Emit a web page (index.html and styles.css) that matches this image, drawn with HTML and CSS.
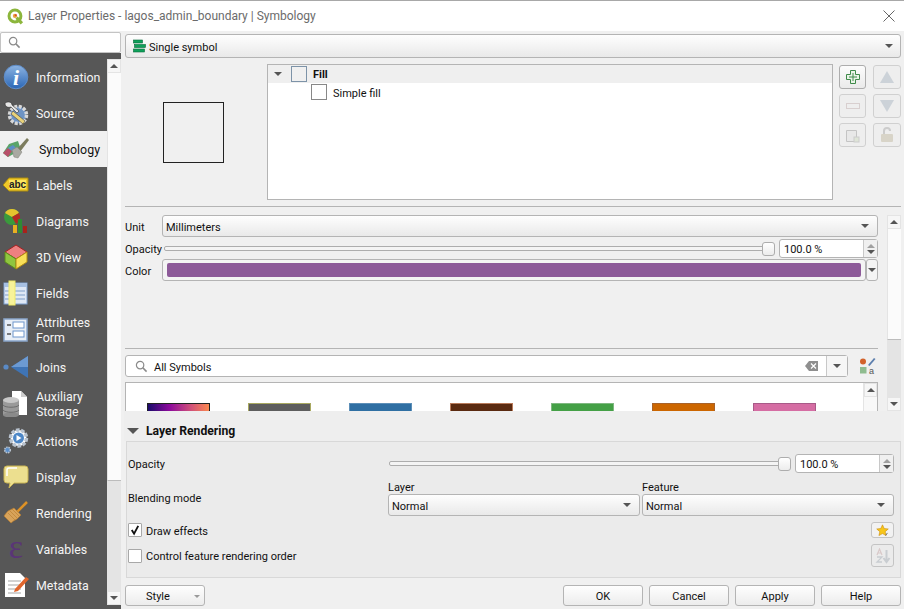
FILE: index.html
```html
<!DOCTYPE html>
<html lang="en">
<head>
    <meta charset="UTF-8">
    <title>Layer Properties - lagos_admin_boundary | Symbology</title>
    <link rel="stylesheet" href="styles.css">
</head>
<body>
    <div class="titlebar">
        <svg class="app-icon" viewBox="0 0 16 16">
            <circle cx="7.5" cy="7.5" r="5.6" fill="none" stroke="#8cb63c" stroke-width="2.8"/>
            <path d="M9 9l5 5.5" stroke="#8cb63c" stroke-width="3"/>
            <circle cx="7.5" cy="7.5" r="2" fill="#e8a33d"/>
            <circle cx="8.2" cy="6.8" r="1" fill="#d9482b"/>
        </svg>
        <span class="title-text">Layer Properties - lagos_admin_boundary | Symbology</span>
        <svg class="close-icon" viewBox="0 0 12 12"><path d="M.5.5l11 11M11.500.5l-11 11" stroke="#666" fill="none"/></svg>
    </div>
    <div class="dialog">
        <aside class="sidebar">
            <div class="side-search">
                <svg class="search-icon" viewBox="0 0 14 14"><circle cx="5.500" cy="5.500" r="4" fill="none" stroke="#8a8a8a" stroke-width="1.300"/><path d="M8.500 8.500l4 4" stroke="#8a8a8a" stroke-width="1.600"/></svg>
            </div>
            <div class="side-body">
                <nav class="side-list">
                    <div class="side-item">
                        <svg viewBox="0 0 26 26"><defs><linearGradient id="infoBlue" x1="0" y1="0" x2="0" y2="1"><stop offset="0" stop-color="#8db4e2"/><stop offset="1" stop-color="#2a66b5"/></linearGradient></defs><circle cx="13" cy="13" r="11.800" fill="url(#infoBlue)" stroke="#5e8cc8"/><text x="13" y="21" class="info-i">i</text></svg>
                        <span>Information</span>
                    </div>
                    <div class="side-item">
                        <svg viewBox="0 0 26 26"><circle cx="15" cy="15" r="8.500" fill="#6d93c4" stroke="#d8d8d8" stroke-width="3.500" stroke-dasharray="3 1.500"/><path d="M2 3c3-2 7-1 7 2l7 6-2 2-6-6C5 8 2 7 2 3z" fill="#e6e6e6" stroke="#333" stroke-width=".6"/><path d="M10 11l12 10-2 3L8 14z" fill="#e8d27a" stroke="#444" stroke-width=".6"/></svg>
                        <span>Source</span>
                    </div>
                    <div class="side-item current">
                        <svg viewBox="0 0 26 26"><path d="M6 8l9-3 3 9-13 7-5-4z" fill="#5aa469"/><path d="M0 17l5-5 4 3-4 6z" fill="#b8506a"/><path d="M5 12l5-3 3 3-4 3z" fill="#5c8fc9"/><path d="M14 13L24 2l2 2-9 12z" fill="#7d7d5e"/><path d="M9 14l5-3 5 5-4 6-4-1z" fill="#a9a9a2" stroke="#808078" stroke-width=".5"/></svg>
                        <span>Symbology</span>
                    </div>
                    <div class="side-item">
                        <svg viewBox="0 0 26 26"><path d="M6 6h19v13H6l-6-6z" fill="#f0c929" stroke="#a98a12"/><rect x="6" y="8" width="17" height="9" fill="#fbe65f"/><text x="14.500" y="16" class="abc">abc</text></svg>
                        <span>Labels</span>
                    </div>
                    <div class="side-item">
                        <svg viewBox="0 0 26 26"><circle cx="9" cy="9" r="8" fill="#3a9a3c"/><path d="M9 9V1a8 8 0 0 1 7 4z" fill="#e5c32e"/><path d="M9 9L2 5a8 8 0 0 1 7-4z" fill="#e5c32e"/><path d="M9 9l7-4a8 8 0 0 1-3 11z" fill="#b22a22"/><rect x="10" y="17" width="4" height="8" fill="#e8b021"/><rect x="15" y="11" width="4" height="14" fill="#2f8a34"/><rect x="20" y="18" width="4" height="7" fill="#a8231b"/></svg>
                        <span>Diagrams</span>
                    </div>
                    <div class="side-item">
                        <svg viewBox="0 0 26 26"><path d="M13 1l11 7-11 7L2 8z" fill="#ee8080" stroke="#a52020"/><path d="M2 8l11 7v10L2 18z" fill="#8fc63f" stroke="#5b8a1d"/><path d="M24 8l-11 7v10l11-7z" fill="#f8df58" stroke="#b28e12"/></svg>
                        <span>3D View</span>
                    </div>
                    <div class="side-item">
                        <svg viewBox="0 0 26 26"><rect x="1" y="3" width="23" height="21" fill="#dfe8f5" stroke="#7da0cf"/><rect x="1" y="3" width="23" height="4" fill="#a7c0e2"/><path d="M12 11h10M12 15h10M12 19h10M2 11h4M2 15h4M2 19h4" stroke="#7f9fc9"/><rect x="6" y="1" width="6" height="24" fill="#f8f39a" stroke="#f0e96a"/></svg>
                        <span>Fields</span>
                    </div>
                    <div class="side-item tall">
                        <svg viewBox="0 0 26 26"><rect x="1" y="2" width="23" height="22" fill="#e8eef6" stroke="#8aa6cc" stroke-width="1.500"/><path d="M4 8h4M4 17h4" stroke="#555" stroke-width="1.500"/><rect x="10" y="5" width="11" height="6" fill="#fff" stroke="#6d95cc"/><rect x="10" y="14" width="11" height="6" fill="#fff" stroke="#6d95cc"/></svg>
                        <span>Attributes<br>Form</span>
                    </div>
                    <div class="side-item">
                        <svg viewBox="0 0 26 26"><circle cx="3" cy="13" r="2.600" fill="#5a8ac6"/><path d="M25 2v22L8 13z" fill="#3f74b5"/><path d="M25 2v11H8z" fill="#6c9ad2"/></svg>
                        <span>Joins</span>
                    </div>
                    <div class="side-item tall">
                        <svg viewBox="0 0 26 26"><path d="M9 0h9l6 6v18H9z" fill="#fff"/><path d="M18 0v6h6z" fill="#ccc"/><rect x="0" y="9" width="16" height="15" fill="#9a9a9a"/><ellipse cx="8" cy="9" rx="8" ry="3" fill="#c8c8c8"/><ellipse cx="8" cy="24" rx="8" ry="2.500" fill="#8a8a8a"/><path d="M0 14c2 3 14 3 16 0M0 19c2 3 14 3 16 0" fill="none" stroke="#6e6e6e"/></svg>
                        <span>Auxiliary<br>Storage</span>
                    </div>
                    <div class="side-item">
                        <svg viewBox="0 0 26 26"><circle cx="15.500" cy="10" r="8" fill="#fff" stroke="#b9c3cf" stroke-width="3.500" stroke-dasharray="3.500 1.500"/><circle cx="15.500" cy="10" r="5.500" fill="#4d87c7"/><path d="M13.500 7l5 3-5 3z" fill="#fff"/><circle cx="4.500" cy="22" r="2.800" fill="#5b8fca" stroke="#b9c3cf" stroke-width="1.600" stroke-dasharray="1.500 .8"/></svg>
                        <span>Actions</span>
                    </div>
                    <div class="side-item">
                        <svg viewBox="0 0 26 26"><path d="M4 2h18q3 0 3 3v11q0 3-3 3H11l-5 5 1-5H4q-3 0-3-3V5q0-3 3-3z" fill="#ecdf8f" stroke="#c9b455"/><path d="M4 12V6q0-2 2-2h8" fill="none" stroke="#fff" stroke-width="1.500"/></svg>
                        <span>Display</span>
                    </div>
                    <div class="side-item">
                        <svg viewBox="0 0 26 26"><path d="M13 13L24 2" stroke="#dd9226" stroke-width="2.500"/><path d="M11 8l7 7-4 4q-4 2-6 4l-7-7q2-3 4-5z" fill="#d8a35a" stroke="#b87b2a" stroke-width=".6"/><path d="M5 13l7 7M7 11l7 7M9 9l7 7" stroke="#b87b2a" stroke-width=".6"/></svg>
                        <span>Rendering</span>
                    </div>
                    <div class="side-item">
                        <b class="epsilon">ε</b>
                        <span>Variables</span>
                    </div>
                    <div class="side-item">
                        <svg viewBox="0 0 26 26"><path d="M2 1h15l5 5v19H2z" fill="#fff"/><path d="M5 9h13M5 13h13M5 17h13M5 21h13" stroke="#a5a5a5" stroke-width="1.200"/><path d="M12 17L23 5l3 2-11 12-4 1z" fill="#e0652c"/></svg>
                        <span>Metadata</span>
                    </div>
                </nav>
                <div class="side-scroll">
                    <div class="sb-btn"><i class="arrow-up"></i></div>
                    <div class="sb-handle"></div>
                    <div class="sb-track"></div>
                    <div class="sb-btn"><i class="arrow-down"></i></div>
                </div>
            </div>
        </aside>

        <main class="content">
            <div class="combo renderer">
                <svg class="renderer-icon" viewBox="0 0 14 14"><rect x=".5" y="1" width="9" height="3" fill="#0fa05a" stroke="#056b3a" stroke-width=".6"/><rect x="1.500" y="5.500" width="11" height="3" fill="#0fa05a" stroke="#056b3a" stroke-width=".6"/><rect x=".5" y="10" width="11" height="3" fill="#0fa05a" stroke="#056b3a" stroke-width=".6"/></svg>
                <span>Single symbol</span>
                <i class="arrow-down dark"></i>
            </div>

            <div class="symbol-top">
                <div class="preview"><div class="preview-box"></div></div>
                <div class="layer-tree">
                    <div class="tree-row head">
                        <i class="arrow-down tree-arrow"></i>
                        <span class="tree-swatch head-swatch"></span>
                        <b>Fill</b>
                    </div>
                    <div class="tree-row child">
                        <span class="tree-swatch"></span>
                        <span class="tree-text">Simple fill</span>
                    </div>
                </div>
                <div class="tree-buttons">
                    <div class="tool-btn active"><svg viewBox="0 0 16 16"><path d="M5.500 1.500h5v4h4v5h-4v4h-5v-4h-4v-5h4z" fill="#e9f4e7" stroke="#3f8a4a"/><path d="M8 4v8M4 8h8" stroke="#3f8a4a"/></svg></div>
                    <div class="tool-btn"><svg viewBox="0 0 16 16"><path d="M8 2l7 12H1z" fill="#ccd2d8"/></svg></div>
                    <div class="tool-btn"><svg viewBox="0 0 16 16"><rect x="1.500" y="5.500" width="13" height="5" fill="#eee" stroke="#d8cfcf"/></svg></div>
                    <div class="tool-btn"><svg viewBox="0 0 16 16"><path d="M8 14L1 2h14z" fill="#ccd2d8"/></svg></div>
                    <div class="tool-btn"><svg viewBox="0 0 16 16"><path d="M1.500 3.500h10v11h-10z" fill="#e8e8e8" stroke="#c4c4c4"/><rect x="9" y="10" width="5" height="5" fill="#dfe5d8" stroke="#ccc"/></svg></div>
                    <div class="tool-btn"><svg viewBox="0 0 16 16"><path d="M5 7V4q0-3 3-3t3 3" fill="none" stroke="#ccc" stroke-width="2"/><rect x="2" y="7" width="12" height="8" rx="1" fill="#d8d4c8"/></svg></div>
                </div>
            </div>

            <div class="rule top-rule"></div>

            <div class="symbol-panel">
                <div class="symbol-main">
                    <div class="form-row unit-row">
                        <label>Unit</label>
                        <div class="combo grow"><span>Millimeters</span><i class="arrow-down dark"></i></div>
                    </div>
                    <div class="form-row opacity-row">
                        <label>Opacity</label>
                        <div class="slider"><div class="slider-groove"></div><div class="slider-handle"></div></div>
                        <div class="spin"><span>100.0 %</span><div class="spin-arrows"><i class="arrow-up grey"></i><i class="arrow-down dark"></i></div></div>
                    </div>
                    <div class="form-row color-row">
                        <label>Color</label>
                        <div class="color-btn"><div class="color-fill"></div></div>
                        <div class="color-drop"><i class="arrow-down dark"></i></div>
                    </div>
                    <div class="splitter"></div>
                    <div class="rule mid-rule"></div>
                    <div class="search-row">
                        <div class="symbol-search">
                            <svg class="search-icon" viewBox="0 0 14 14"><circle cx="5.500" cy="5.500" r="4" fill="none" stroke="#8a8a8a" stroke-width="1.300"/><path d="M8.500 8.500l4 4" stroke="#8a8a8a" stroke-width="1.600"/></svg>
                            <span>All Symbols</span>
                            <svg class="clear-icon" viewBox="0 0 13 10"><path d="M4 0h9v10H4L0 5z" fill="#8f8f8f"/><path d="M6 2.500l5 5M11 2.500l-5 5" stroke="#fff" stroke-width="1.200"/></svg>
                            <div class="search-drop"><i class="arrow-down dark"></i></div>
                        </div>
                        <svg class="style-icon" viewBox="0 0 18 18"><circle cx="5" cy="4.500" r="3" fill="#d2622a"/><path d="M10 8l6-7 1.500 1-6 7z" fill="#5d7fae"/><rect x="2" y="10" width="6.500" height="6.500" fill="#8fbc8f"/><text x="13.500" y="17" class="style-a">a</text></svg>
                    </div>
                    <div class="symbol-list">
                        <div class="swatches">
                            <div class="swatch magma"></div>
                            <div class="swatch grey"></div>
                            <div class="swatch blue"></div>
                            <div class="swatch brown"></div>
                            <div class="swatch green"></div>
                            <div class="swatch orange"></div>
                            <div class="swatch pink"></div>
                        </div>
                        <div class="list-scroll"><div class="sb-btn"><i class="arrow-up"></i></div></div>
                    </div>
                </div>
                <div class="panel-scroll">
                    <div class="sb-btn"><i class="arrow-up"></i></div>
                    <div class="sb-handle"></div>
                    <div class="sb-track"></div>
                    <div class="sb-btn"><i class="arrow-down"></i></div>
                </div>
            </div>

            <div class="section-title"><i class="arrow-down big"></i><b>Layer Rendering</b></div>
            <div class="group">
                <div class="group-row opacity">
                    <label>Opacity</label>
                    <div class="slider"><div class="slider-groove"></div><div class="slider-handle"></div></div>
                    <div class="spin"><span>100.0 %</span><div class="spin-arrows"><i class="arrow-up grey"></i><i class="arrow-down dark"></i></div></div>
                </div>
                <div class="group-row blending">
                    <label>Blending mode</label>
                    <div class="blend-col layer-col">
                        <div class="blend-label">Layer</div>
                        <div class="combo"><span>Normal</span><i class="arrow-down dark"></i></div>
                    </div>
                    <div class="blend-col feature-col">
                        <div class="blend-label">Feature</div>
                        <div class="combo"><span>Normal</span><i class="arrow-down dark"></i></div>
                    </div>
                </div>
                <div class="group-row effects">
                    <span class="check"><svg viewBox="0 0 13 13"><path d="M3 6.500l2.500 4L10 2" fill="none" stroke="#111" stroke-width="2"/></svg></span>
                    <span class="check-label">Draw effects</span>
                    <div class="mini-btn star"><svg viewBox="0 0 16 16"><path d="M8 1l2.100 4.600 5 .5-3.800 3.300 1.100 4.900L8 11.800l-4.400 2.500 1.100-4.900L.9 6.100l5-.5z" fill="#f7c61a" stroke="#c98a0a" stroke-width=".7"/><path d="M12 14l2-3" stroke="#555"/></svg></div>
                </div>
                <div class="group-row order">
                    <span class="check"></span>
                    <span class="check-label">Control feature rendering order</span>
                    <div class="mini-btn sort"><svg viewBox="0 0 16 16"><path d="M11.500 2v11M8.500 10l3 4 3-4" fill="none" stroke="#c9cdd1" stroke-width="2"/><path d="M2 7l2.500-6L7 7M3 5h3" fill="none" stroke="#d9c9c9" stroke-width="1.200"/><path d="M2 9h5l-5 5h5" fill="none" stroke="#c9cdd1" stroke-width="1.300"/></svg></div>
                </div>
            </div>

            <div class="button-bar">
                <div class="btn style-btn"><span>Style</span><i class="arrow-down grey"></i></div>
                <div class="spacer"></div>
                <div class="btn">OK</div>
                <div class="btn">Cancel</div>
                <div class="btn">Apply</div>
                <div class="btn">Help</div>
            </div>
        </main>
    </div>
</body>
</html>
```
FILE: styles.css
```css
* {
    box-sizing: border-box;
}
body {
    margin: 0;
    height: 609px;
    overflow: hidden;
    background: #f0f0f0;
    font-family: Roboto, "Open Sans", sans-serif;
    font-size: 11px;
    color: #111;
}
i {
    display: block;
}
.arrow-up {
    width: 0;
    height: 0;
    border-left: 4px solid transparent;
    border-right: 4px solid transparent;
    border-bottom: 4px solid #555;
}
.arrow-down {
    width: 0;
    height: 0;
    border-left: 4px solid transparent;
    border-right: 4px solid transparent;
    border-top: 4px solid #555;
}
.arrow-up.grey {
    border-bottom-color: #a0a0a0;
}
.arrow-down.grey {
    border-top-color: #999;
    border-left-width: 3px;
    border-right-width: 3px;
    border-top-width: 3px;
}
.arrow-down.big {
    border-left-width: 6px;
    border-right-width: 6px;
    border-top-width: 6px;
}
/* roboto sits a bit high next to the controls */
.combo span,
.symbol-search span,
.spin span,
.form-row label,
.group-row.opacity label,
.check-label,
.tree-text {
    padding-top: 2px;
}

/* title bar */
.titlebar {
    height: 31px;
    background: #fff;
    border-top: 1px solid #a8a8a8;
    display: flex;
    align-items: center;
    padding: 0 9px 0 7px;
}
.app-icon {
    width: 17px;
    height: 17px;
}
.title-text {
    margin-left: 4px;
    font-size: 12px;
    color: #6b6b6b;
}
.close-icon {
    width: 12px;
    height: 12px;
    margin-left: auto;
}

/* left list */
.dialog {
    display: flex;
    height: 578px;
}
.sidebar {
    width: 121px;
    flex: none;
    display: flex;
    flex-direction: column;
}
.side-search {
    height: 21px;
    margin: 1px 0 0;
    background: #fff;
    border: 1px solid #c4c4c4;
    border-radius: 2px;
    padding-left: 7px;
    display: flex;
    align-items: center;
}
.search-icon {
    width: 13px;
    height: 13px;
}
.side-body {
    flex: 1;
    display: flex;
    background: #575757;
}
.side-list {
    width: 107px;
    padding-top: 6px;
    background: #575757;
    color: #f4f4f4;
    font-size: 12.4px;
}
.side-item {
    height: 36px;
    display: flex;
    align-items: center;
    padding-left: 3px;
    line-height: 15px;
}
.side-item.tall {
    height: 38px;
}
.side-item svg,
.epsilon {
    width: 26px;
    height: 26px;
    flex: none;
    margin-right: 7px;
}
.side-item.current {
    background: #f0f0f0;
    color: #111;
}
.side-item.current svg {
    margin-right: 10px;
}
.info-i {
    font-family: "Liberation Serif", serif;
    font-size: 22px;
    font-weight: bold;
    font-style: italic;
    fill: #fff;
    text-anchor: middle;
}
.abc {
    font-family: "Liberation Sans", sans-serif;
    font-size: 10px;
    font-weight: bold;
    fill: #222;
    text-anchor: middle;
}
.epsilon {
    font-family: "Liberation Serif", serif;
    font-size: 34px;
    font-weight: normal;
    line-height: 22px;
    text-align: center;
    color: #5a3577;
}
.style-a {
    font-family: "Liberation Sans", sans-serif;
    font-size: 9px;
    fill: #555;
    text-anchor: middle;
}

/* scroll bars */
.side-scroll {
    width: 14px;
    margin-top: 6px;
    margin-bottom: 4px;
    display: flex;
    flex-direction: column;
    background: #fff;
}
.sb-btn {
    height: 14px;
    flex: none;
    background: #f6f6f6;
    border: 1px solid #e4e4e4;
    display: flex;
    align-items: center;
    justify-content: center;
}
.sb-handle {
    flex: 1;
    background: #fbfbfb;
    border-left: 1px solid #e4e4e4;
    border-bottom: 1px solid #bcbcbc;
}
.sb-track {
    flex: none;
    height: 110px;
    background: #e4e4e4;
}

/* content */
.content {
    flex: 1;
    padding: 3px 3px 0 4px;
    min-width: 0;
}
.combo {
    height: 22px;
    display: flex;
    align-items: center;
    justify-content: space-between;
    padding: 0 8px 0 3px;
    border: 1px solid #b4b4b4;
    border-radius: 3px;
    background: linear-gradient(#fefefe, #e9e9e9);
}
.combo.grow {
    flex: 1;
}
.renderer {
    height: 24px;
    justify-content: flex-start;
    padding-left: 7px;
}
.renderer .arrow-down {
    margin-left: auto;
    margin-right: -1px;
}
.renderer-icon {
    width: 14px;
    height: 14px;
    margin-right: 2px;
}
.symbol-top {
    display: flex;
    margin-top: 6px;
    height: 136px;
}
.preview {
    width: 142px;
    display: flex;
    align-items: center;
    justify-content: center;
    padding: 0 6px 0 0;
}
.preview-box {
    width: 61px;
    height: 61px;
    margin-top: 1px;
    background: #f0f0f0;
    border: 1px solid #222;
}
.layer-tree {
    width: 566px;
    background: #fff;
    border: 1px solid #b4b4b4;
}
.tree-row {
    height: 18px;
    display: flex;
    align-items: center;
}
.tree-row.head {
    background: #efefef;
    padding-left: 6px;
}
.tree-row.child {
    padding-left: 43px;
}
.tree-arrow {
    margin-right: 9px;
}
.tree-swatch {
    width: 16px;
    height: 16px;
    flex: none;
    margin-right: 6px;
    background: #fff;
    border: 1px solid #888;
}
.head-swatch {
    background: #f0f0f0;
    border-color: #7d93a8;
}
.tree-buttons {
    margin: 1px 0 0 6px;
    display: grid;
    grid-template-columns: 27px 28px;
    grid-template-rows: repeat(3, 24px);
    column-gap: 7px;
    row-gap: 5px;
}
.tool-btn {
    border: 1px solid #d0d0d0;
    border-radius: 3px;
    background: #eee;
    display: flex;
    align-items: center;
    justify-content: center;
}
.tool-btn.active {
    border-color: #adadad;
    background: linear-gradient(#fcfcfc, #eaeaea);
}
.tool-btn svg {
    width: 16px;
    height: 16px;
}
.rule {
    height: 1px;
    background: #b4b4b4;
}
.top-rule {
    margin-top: 6px;
}
.symbol-panel {
    display: flex;
    height: 204px;
    overflow: hidden;
}
.symbol-main {
    width: 753px;
    padding-top: 8px;
}
.form-row {
    display: flex;
    align-items: center;
}
.form-row label {
    width: 37px;
    flex: none;
}
.form-row .slider {
    margin-left: 2px;
}
.unit-row {
    height: 22px;
}
.opacity-row {
    height: 21px;
    margin-top: 1px;
}
.slider {
    flex: 1;
    display: flex;
    align-items: center;
    min-width: 0;
}
.slider-groove {
    flex: 1;
    height: 5px;
    background: #f4f4f4;
    border: 1px solid #adadad;
    border-radius: 2px;
}
.slider-handle {
    width: 13px;
    height: 14px;
    margin-left: -7px;
    background: linear-gradient(#fff, #ececec);
    border: 1px solid #adadad;
    border-radius: 3px;
}
.spin {
    width: 99px;
    height: 19px;
    flex: none;
    margin-left: 4px;
    display: flex;
    align-items: center;
    background: #fff;
    border: 1px solid #b4b4b4;
    border-radius: 3px;
    padding-left: 4px;
}
.spin span {
    flex: 1;
}
.spin-arrows {
    width: 14px;
    height: 100%;
    border-left: 1px solid #c8c8c8;
    background: #f0f0f0;
    display: flex;
    flex-direction: column;
    align-items: center;
    justify-content: center;
    gap: 2px;
}
.color-row {
    height: 22px;
}
.color-btn {
    flex: 1;
    height: 22px;
    padding: 3px 4px;
    border: 1px solid #b4b4b4;
    border-radius: 3px;
    background: #f4f4f4;
}
.color-fill {
    height: 100%;
    background: #8d5a99;
    border-radius: 2px;
}
.color-drop {
    width: 12px;
    height: 22px;
    border: 1px solid #b4b4b4;
    border-radius: 3px;
    background: #f4f4f4;
    display: flex;
    align-items: center;
    justify-content: center;
}
.splitter {
    width: 1px;
    height: 16px;
    margin: 31px 0 0 -2px;
    border-left: 1px dotted #aaa;
}
.mid-rule {
    margin-top: 20px;
}
.search-row {
    display: flex;
    align-items: center;
    margin-top: 6px;
}
.symbol-search {
    width: 723px;
    height: 22px;
    display: flex;
    align-items: center;
    padding-left: 9px;
    background: #fff;
    border: 1px solid #b4b4b4;
    border-radius: 3px;
}
.symbol-search span {
    margin-left: 6px;
}
.clear-icon {
    width: 13px;
    height: 10px;
    margin-left: auto;
    margin-right: 8px;
}
.search-drop {
    width: 21px;
    height: 100%;
    border-left: 1px solid #c8c8c8;
    background: #f6f6f6;
    display: flex;
    align-items: center;
    justify-content: center;
}
.style-icon {
    width: 18px;
    height: 18px;
    margin-left: 10px;
}
.symbol-list {
    height: 40px;
    margin-top: 5px;
    display: flex;
    background: #fff;
    border: 1px solid #b4b4b4;
}
.swatches {
    flex: 1;
    display: flex;
    gap: 38px;
    padding: 20px 0 0 21px;
}
.swatch {
    width: 63px;
    height: 30px;
    border: 1px solid #444;
}
.swatch.magma {
    background: linear-gradient(90deg, #1b0c6b, #8c0a9c 35%, #d0507a 70%, #fb8850);
    border-color: #222;
}
.swatch.grey {
    background: #5d5d5d;
    border-color: #a8a860;
}
.swatch.blue {
    background: #2f6fa3;
    border-color: #5d8fb8;
}
.swatch.brown {
    background: #5a2a10;
    border-color: #b87a5a;
}
.swatch.green {
    background: #44a046;
    border-color: #7fb880;
}
.swatch.orange {
    background: #cc6600;
    border-color: #a8622a;
}
.swatch.pink {
    background: #d56da3;
    border-color: #a85a88;
}
.list-scroll {
    width: 14px;
    flex: none;
    background: #f8f8f8;
    border-left: 1px solid #e4e4e4;
}
.panel-scroll {
    width: 14px;
    flex: none;
    margin: 8px 0 0 9px;
    display: flex;
    flex-direction: column;
}
.panel-scroll .sb-track {
    height: 57px;
}

/* layer rendering */
.section-title {
    height: 30px;
    padding: 10px 0 0 3px;
    display: flex;
    align-items: center;
    margin-left: -1px;
    gap: 7px;
    background: #eee;
}
.section-title b {
    font-size: 12.2px;
}
.group {
    height: 137px;
    margin-left: 1px;
    padding: 0 6px 0 1px;
    background: #ebebeb;
    border: 1px solid #d8d8d8;
}
.group-row {
    display: flex;
    align-items: center;
}
.group-row.opacity {
    height: 19px;
    margin-top: 12px;
}
.group-row.opacity label {
    width: 261px;
    flex: none;
}
.group-row.blending {
    margin-top: 6px;
    height: 37px;
    align-items: flex-end;
}
.group-row.blending label {
    width: 260px;
    flex: none;
    padding-bottom: 11px;
}
.blend-col {
    width: 252px;
    flex: none;
}
.feature-col {
    margin-left: 2px;
}
.blend-label {
    line-height: 13px;
}
.group-row.effects {
    margin-top: 6px;
    height: 16px;
}
.group-row.order {
    margin-top: 6px;
    height: 23px;
}
.check {
    width: 14px;
    height: 14px;
    flex: none;
    background: #fff;
    border: 1px solid #a8a8a8;
    border-radius: 1px;
    display: flex;
}
.check-label {
    margin-left: 4px;
}
.mini-btn {
    width: 23px;
    margin-left: auto;
    display: flex;
    align-items: center;
    justify-content: center;
    border: 1px solid #c4c4c4;
    border-radius: 3px;
    background: #f2f2f2;
}
.mini-btn.star {
    height: 16px;
}
.mini-btn.star svg {
    width: 13px;
    height: 13px;
}
.mini-btn.sort {
    height: 23px;
    background: #ebebeb;
}
.mini-btn.sort svg {
    width: 16px;
    height: 16px;
}

/* bottom buttons */
.button-bar {
    display: flex;
    gap: 6px;
    margin-top: 7px;
}
.spacer {
    flex: 1;
}
.btn {
    width: 80px;
    height: 21px;
    display: flex;
    align-items: center;
    justify-content: center;
    padding-top: 2px;
    border: 1px solid #b4b4b4;
    border-radius: 3px;
    background: linear-gradient(#fefefe, #ececec);
}
.style-btn {
    justify-content: space-between;
    padding: 2px 4px 0 20px;
}
```
